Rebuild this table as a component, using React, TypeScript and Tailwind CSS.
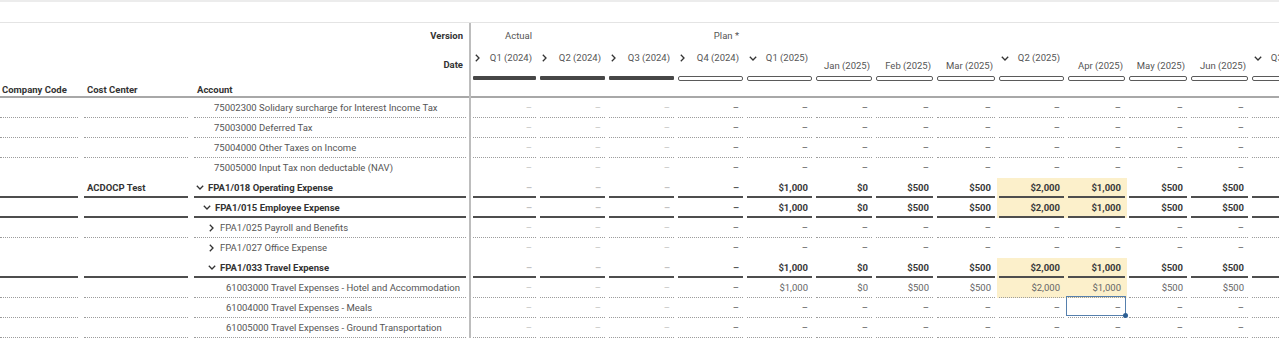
import React from "react";

type Col = { label: string; w: string; quarter: boolean; open?: boolean; actual: boolean };

const cols: Col[] = [
  { label: "Q1 (2024)", w: "w-[67px]", quarter: true, actual: true },
  { label: "Q2 (2024)", w: "w-[69px]", quarter: true, actual: true },
  { label: "Q3 (2024)", w: "w-[69px]", quarter: true, actual: true },
  { label: "Q4 (2024)", w: "w-[69px]", quarter: true, actual: false },
  { label: "Q1 (2025)", w: "w-[69px]", quarter: true, open: true, actual: false },
  { label: "Jan (2025)", w: "w-[60px]", quarter: false, actual: false },
  { label: "Feb (2025)", w: "w-[61px]", quarter: false, actual: false },
  { label: "Mar (2025)", w: "w-[62px]", quarter: false, actual: false },
  { label: "Q2 (2025)", w: "w-[69px]", quarter: true, open: true, actual: false },
  { label: "Apr (2025)", w: "w-[61px]", quarter: false, actual: false },
  { label: "May (2025)", w: "w-[62px]", quarter: false, actual: false },
  { label: "Jun (2025)", w: "w-[61px]", quarter: false, actual: false },
  { label: "Q3 (2025)", w: "w-[69px]", quarter: true, open: true, actual: false },
];

type Line = "dot" | "bold" | "none";
type Row = {
  acct: string;
  pad: string;
  chev?: "down" | "right";
  bold?: boolean;
  cost?: string;
  line: Line;
  vals: "dash" | "money";
  hl?: boolean;
  sel?: number;
};

const rows: Row[] = [
  { acct: "75002300 Solidary surcharge for Interest Income Tax", pad: "pl-[20px]", line: "dot", vals: "dash" },
  { acct: "75003000 Deferred Tax", pad: "pl-[20px]", line: "dot", vals: "dash" },
  { acct: "75004000 Other Taxes on Income", pad: "pl-[20px]", line: "dot", vals: "dash" },
  { acct: "75005000 Input Tax non deductable (NAV)", pad: "pl-[20px]", line: "none", vals: "dash" },
  { acct: "FPA1/018 Operating Expense", pad: "pl-[2px]", chev: "down", bold: true, cost: "ACDOCP Test", line: "bold", vals: "money", hl: true },
  { acct: "FPA1/015 Employee Expense", pad: "pl-[9px]", chev: "down", bold: true, line: "bold", vals: "money", hl: true },
  { acct: "FPA1/025 Payroll and Benefits", pad: "pl-[14px]", chev: "right", line: "dot", vals: "dash" },
  { acct: "FPA1/027 Office Expense", pad: "pl-[14px]", chev: "right", line: "none", vals: "dash" },
  { acct: "FPA1/033 Travel Expense", pad: "pl-[14px]", chev: "down", bold: true, line: "bold", vals: "money", hl: true },
  { acct: "61003000 Travel Expenses - Hotel and Accommodation", pad: "pl-[32px]", line: "dot", vals: "money", hl: true },
  { acct: "61004000 Travel Expenses - Meals", pad: "pl-[32px]", line: "dot", vals: "dash", sel: 9 },
  { acct: "61005000 Travel Expenses - Ground Transportation", pad: "pl-[32px]", line: "dot", vals: "dash" },
];

const money = ["–", "–", "–", "–", "$1,000", "$0", "$500", "$500", "$2,000", "$1,000", "$500", "$500", ""];
const dashes = ["–", "–", "–", "–", "–", "–", "–", "–", "–", "–", "–", "–", ""];

const lineCls: Record<Line, string> = {
  dot: "border-b border-dotted border-[#9c9c9c]",
  bold: "border-b-2 border-[#4e4e4e]",
  none: "border-b border-transparent",
};

function ChevDown() {
  return (
    <svg width="8" height="5" viewBox="0 0 8 5" className="shrink-0">
      <path d="M0.8 0.8L4 4L7.2 0.8" fill="none" stroke="#333" strokeWidth="1.3" />
    </svg>
  );
}

function ChevRight() {
  return (
    <svg width="5" height="8" viewBox="0 0 5 8" className="shrink-0">
      <path d="M0.8 0.8L4 4L0.8 7.2" fill="none" stroke="#333" strokeWidth="1.3" />
    </svg>
  );
}

export default function App() {
  return (
    <div className="w-[1279px] h-[340px] overflow-hidden bg-white text-[9.5px] leading-[12px] text-[#555] font-['Roboto',Arial,sans-serif]">
      <div className="h-[23px] border-t-2 border-[#ececec] border-b border-b-[#e4e4e4]" />
      <div className="flex">
        {/* left pane */}
        <div className="w-[469px] shrink-0">
          <div className="h-[24px] flex items-center justify-end pr-[6px] pt-[2px] font-bold text-[#333]">Version</div>
          <div className="h-[35px] flex justify-end pr-[6px] pt-[12px] font-bold text-[#333]">Date</div>
          <div className="h-[16px] flex border-b-2 border-[#a8a8a8] font-bold text-[#333]">
            <div className="w-[81px] pl-[2px] pt-[1px] flex items-center">Company Code</div>
            <div className="w-[110px] pl-[6px] pt-[1px] flex items-center">Cost Center</div>
            <div className="w-[278px] pl-[6px] pt-[1px] flex items-center">Account</div>
          </div>
          {rows.map((r, i) => (
            <div key={i} className={`h-[20px] flex ${r.bold ? "font-bold text-[#333]" : ""}`}>
              <div className={`w-[78px] mr-[3px] ${lineCls[r.line]}`} />
              <div className={`w-[104px] mx-[3px] pl-[3px] pt-[1px] flex items-center ${lineCls[r.line]}`}>{r.cost}</div>
              <div className={`w-[272px] mx-[3px] pt-[1px] flex items-center whitespace-nowrap ${r.pad} ${lineCls[r.line]}`}>
                {r.chev && (
                  <span className="w-[12px] flex items-center">
                    {r.chev === "down" ? <ChevDown /> : <span className="pl-[1px] flex"><ChevRight /></span>}
                  </span>
                )}
                <span>{r.acct}</span>
              </div>
            </div>
          ))}
        </div>

        {/* divider */}
        <div className="w-[2px] shrink-0 bg-[#bdbdbd]" />

        {/* right pane */}
        <div className="flex-1 overflow-hidden">
          <div className="h-[24px] flex">
            {cols.map((c, i) => (
              <div key={i} className={`${c.w} shrink-0 flex items-center justify-end pr-[6px] pt-[2px]`}>
                {i === 0 ? "Actual" : i === 3 ? "Plan *" : ""}
              </div>
            ))}
          </div>
          <div className="h-[35px] flex">
            {cols.map((c, i) => (
              <div key={i} className={`${c.w} shrink-0 flex flex-col`}>
                {c.quarter ? (
                  <div className="h-[29px] flex justify-between items-start pt-[5px] pl-[4px] pr-[6px] whitespace-nowrap">
                    <span className="h-[12px] flex items-center">{c.open ? <ChevDown /> : <ChevRight />}</span>
                    <span>{c.label}</span>
                  </div>
                ) : (
                  <div className="h-[29px] flex justify-end pt-[13px] pr-[4px] whitespace-nowrap">{c.label}</div>
                )}
                {c.actual ? (
                  <div className="mx-[2px] h-[4px] rounded-[1px] bg-[#474747]" />
                ) : (
                  <div className="mx-[2px] h-[5px] -mt-[0.5px] rounded-[2px] border border-[#5a5a5a] bg-white" />
                )}
              </div>
            ))}
          </div>
          <div className="h-[16px] border-b-2 border-[#a8a8a8] w-[900px]" />
          {rows.map((r, ri) => {
            const vals = r.vals === "money" ? money : dashes;
            return (
              <div key={ri} className={`h-[20px] flex ${r.bold ? "font-bold text-[#3a3a3a]" : ""}`}>
                {cols.map((c, ci) => {
                  const v = vals[ci];
                  const isDash = v === "–";
                  const color = isDash ? (c.actual ? "text-[#c2c2c2]" : "text-[#555]") : r.bold ? "" : "text-[#666]";
                  const hl = r.hl && (ci === 8 || ci === 9);
                  return (
                    <div key={ci} className={`${c.w} shrink-0 relative ${hl ? "bg-[#fcf0cb]" : ""}`}>
                      <div className={`h-full mx-[2px] pr-[4px] pt-[1px] flex items-center justify-end ${color} ${lineCls[r.line]}`}>{v}</div>
                      {r.sel === ci && (
                        <div className="absolute left-0 right-[1px] -top-[2px] bottom-[2px] border border-[#5680ad]">
                          <div className="absolute -right-[3px] -bottom-[3px] w-[5px] h-[5px] rounded-full bg-[#2d5f94]" />
                        </div>
                      )}
                    </div>
                  );
                })}
              </div>
            );
          })}
        </div>
      </div>
    </div>
  );
}
